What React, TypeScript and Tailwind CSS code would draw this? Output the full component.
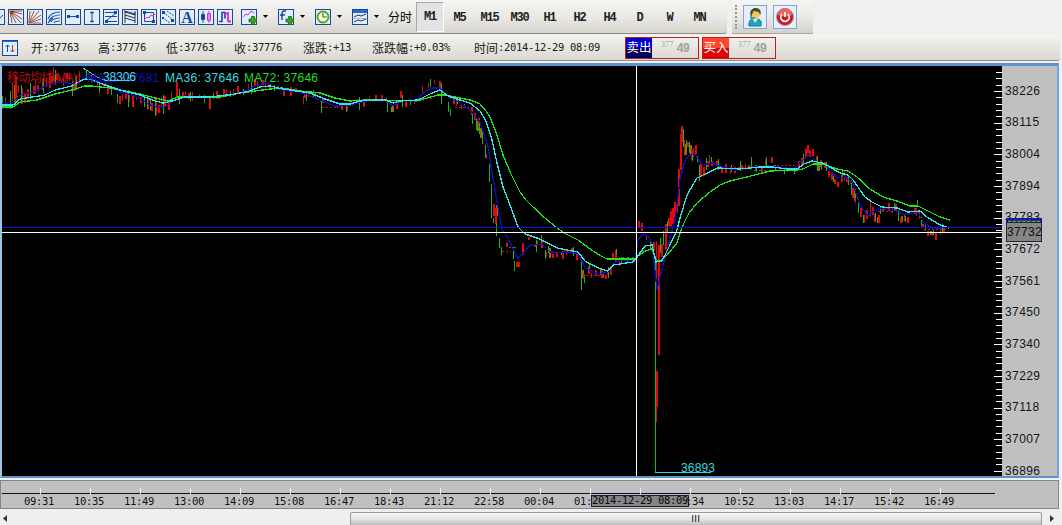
import React from "react";

const NUM = "font-['DejaVu_Sans_Mono','Noto_Sans_CJK_SC',monospace] text-[10.5px] tracking-[-.32px]";
const CJK = "font-['Noto_Sans_CJK_SC',sans-serif] text-[12px] tracking-normal";

function Tool({ children, box = true }: { children?: React.ReactNode; box?: boolean }) {
  return (
    <svg width="16" height="16" viewBox="0 0 16 16" fill="none" stroke="#1848a0" className="block shrink-0">
      {box && <rect x="0.5" y="0.5" width="15" height="15" fill="#e0edfc" stroke="#164b9b" />}
      {children}
    </svg>
  );
}

function Plus() {
  return (
    <path d="M8.500 9.500h2.500V7h3v2.500h2.500v3H14V15h-3v-2.500H8.500z" transform="translate(-.5 .5)" fill="#39a31c" stroke="#176415" strokeWidth=".8" />
  );
}

function Caret() {
  return (
    <svg width="6" height="4" viewBox="0 0 6 4" className="mx-[6px] shrink-0">
      <path d="M0 0h5L2.500 3z" fill="#000" />
    </svg>
  );
}

const PERIODS = ["M1", "M5", "M15", "M30", "H1", "H2", "H4", "D", "W", "MN"];

function ToolRow() {
  return (
    <div className="flex h-[34px] items-start">
      <div className="flex h-[34px] w-[727px] shrink-0 items-center overflow-hidden rounded-r-[3px] border-b border-[#8e8c86] bg-linear-to-b from-[#f5f5f3] via-[#eae9e5] to-[#d6d4cd]">
        <div className="-ml-[11px] flex shrink-0 gap-[3px]">
          <Tool><path d="M8 12l6-6" /></Tool>
          <Tool><path d="M2 2l12 3M2 2l12 8M2 2l11 12M2 2l6 12M2 2l2 12M2 2l12 0" stroke="#9c4a38" /><path d="M2 2h5L3 6z" fill="#9c3424" stroke="none" /></Tool>
          <Tool><path d="M2 14l1-12M2 14l5-12M2 14L12 2M2 14l12-8M2 14l12-4M2 14h12" stroke="#a85642" /></Tool>
          <Tool><path d="M2 10C4 5 8 3 14 3M3 12c2-4 5-6 11-6M5 13c2-3 4-4 9-4M8 14c1-2 3-2 6-2M2 14l5-5" stroke="#2860ac" strokeWidth="1.200" /></Tool>
          <Tool><path d="M3 7.500h10" /><path d="M2 6h3v3H2zM11 6h3v3h-3z" fill="#1848a0" stroke="none" /></Tool>
          <Tool><path d="M8 3.500v9" /><path d="M6.500 3h3v1h-3zM6.500 12h3v1h-3z" fill="#1848a0" strokeWidth=".6" /></Tool>
          <Tool><path d="M2 3.500h12M2 7.500h12M2 12.500h12M3 12L13 4" /><path d="M2 11h3v3H2zM11 2h3v3h-3z" fill="#1848a0" stroke="none" /></Tool>
          <Tool><path d="M3 2v12M3 3l10 3M3 6l10 3M3 9l10 3M13 2v12M2 2l12 3" stroke="#30343c" /></Tool>
          <Tool><path d="M3.500 3.500h9v9h-9z" /><path d="M2 2h3v3H2zM11 11h3v3h-3z" fill="#1848a0" stroke="none" /><path d="M3 11l3-3 2 1 2-3 2 1 2-2" stroke="#cf2ccf" /></Tool>
          <Tool><path d="M3 3l10 8M3 9l7 5M7 2l7 5" strokeDasharray="2 1" /><path d="M2 2h3v3H2zM11 10h3v3h-3zM2 8h2v2H2z" fill="#1848a0" stroke="none" /></Tool>
          <Tool><text x="8" y="13.500" textAnchor="middle" stroke="none" fill="#1648a0" className="font-['Liberation_Serif',serif] text-[16px] font-bold">A</text></Tool>
          <Tool><path d="M5 2v12" /><path d="M3.500 5.500h3v5h-3z" fill="#1648a0" /><path d="M11 2v12M9.500 4.500h3v7h-3z" fill="#f9dbff" stroke="#d72bdc" /></Tool>
          <Tool><path d="M2 12.500h3V3.500h3v6" strokeWidth="1.600" /><path d="M8 4.500h3M11 3v10M11 12.500h3" stroke="#db24da" strokeWidth="1.800" /></Tool>
        </div>
        <div className="ml-[8px] flex shrink-0 items-center">
          <Tool><path d="M2 8l3-3 2 1 3-4 3 2" stroke="#c638d1" /><Plus /></Tool><Caret />
          <span className="w-[3px]" />
          <Tool><path d="M8 2H6Q4 2 4 5v6M2 6h5" strokeWidth="1.400" /><Plus /></Tool><Caret />
          <span className="w-[3px]" />
          <Tool><circle cx="8" cy="8" r="5.500" fill="#f5f8dc" stroke="#52a423" strokeWidth="1.800" /><path d="M8 4v4h4" stroke="#357527" strokeWidth="1.200" /></Tool><Caret />
          <span className="w-[3px]" />
          <Tool><rect x="1" y="1" width="14" height="3" fill="#2869c4" stroke="none" /><path d="M1 9.500h14" stroke="#9dbce4" /><path d="M2 8l4-2 3 1 5-2M2 13l4-2 3 1 5-2" stroke="#283838" /></Tool><Caret />
        </div>
        <span className="ml-[2px] w-[28px] shrink-0 font-['Noto_Sans_CJK_SC',sans-serif] text-[12px] leading-[20px] text-black">分时</span>
        <div className="flex shrink-0">
          {PERIODS.map((p, i) => (
            <span key={p} className={i === 0
              ? "flex h-[30px] w-[28px] items-center justify-center border border-[#aaa] border-r-white border-b-white bg-[#e3e3e6] font-['Liberation_Mono',monospace] text-[12px] font-bold tracking-[-1.2px] text-[#222]"
              : "flex h-[30px] w-[30px] items-center justify-center pt-[2px] pl-px font-['Liberation_Mono',monospace] text-[12px] font-bold tracking-[-1.2px] text-[#222]"}>{p}</span>
          ))}
        </div>
      </div>
      <div className="ml-[5px] flex h-[34px] w-[81px] shrink-0 items-center border-b border-[#aaa8a3] bg-linear-to-b from-[#f5f5f3] via-[#eae9e5] to-[#d3d1ca]">
        <div className="ml-[3px] h-[24px] w-[2px] border-l-2 border-dotted border-[#969692]" />
        <svg width="24" height="24" viewBox="0 0 24 24" className="ml-[6px]">
          <rect x=".5" y=".5" width="23" height="23" fill="#e7edfa" stroke="#86a5d0" />
          <path d="M6 21c-1-6 3-8 7-7 5 0 6 3 5 7z" fill="#239fc0" stroke="#147f9b" />
          <path d="M9 13l3 5 3-4" fill="#d8f0dc" />
          <circle cx="12.500" cy="9" r="4.500" fill="#f1cb58" />
          <path d="M7.500 10c-1-5 2-7 5-7 4 0 6 2 5 7l-2-3-5-1-2 5z" fill="#43522b" />
          <path d="M8 10v3h4" fill="none" stroke="#298eaa" strokeWidth="1.500" />
        </svg>
        <svg width="24" height="24" viewBox="0 0 24 24" className="ml-[6px]">
          <rect x=".5" y=".5" width="23" height="23" fill="#e7edfa" stroke="#86a5d0" />
          <circle cx="12" cy="12" r="8.500" fill="#cf171d" stroke="#9e9a9d" />
          <path d="M5 10a7 7 0 0 1 14 0q-7 3-14 0" fill="#ed6560" />
          <path d="M9 9a4.300 4.300 0 1 0 6 0M12 7v5" stroke="#fff" strokeWidth="1.600" fill="none" />
        </svg>
      </div>
    </div>
  );
}

function Quote({ name, value, width }: { name: string; value: string; width: number }) {
  return (
    <div className="flex shrink-0 items-center pt-px text-[#202020]" style={{ width }}>
      <span className={CJK}>{name}</span>
      <span className={NUM}>:{value}</span>
    </div>
  );
}

function Deal({ label, sell }: { label: string; sell?: boolean }) {
  return (
    <div className="mr-[3px] flex h-[22px] w-[74px] shrink-0 border border-[#b92020]">
      <span className={sell
        ? "flex w-[26px] items-center justify-center bg-linear-to-b from-[#0000cc] from-50% to-[#00005e] to-50% font-['Noto_Sans_CJK_SC',sans-serif] text-[12.5px] text-white"
        : "flex w-[26px] items-center justify-center bg-linear-to-b from-[#ff472b] from-50% to-[#dc0505] to-50% font-['Noto_Sans_CJK_SC',sans-serif] text-[12.5px] text-white"}>{label}</span>
      <span className="mt-[3px] ml-[9px] font-['Liberation_Serif',serif] text-[8px] leading-[8px] tracking-[.2px] text-[#a5a5a1]">377</span>
      <span className="mt-[4px] ml-[3px] font-['Liberation_Mono',monospace] text-[12px] leading-[14px] font-bold tracking-[-1px] text-[#a3a3a0]">49</span>
    </div>
  );
}

function QuoteRow() {
  return (
    <div className="mt-px flex h-[26px] w-[1060px] items-center rounded-r-[3px] border-b border-[#8f8e89] bg-linear-to-b from-[#f3f3f1] to-[#dad8d1]">
      <div className="ml-[2px] w-[29px] shrink-0">
        <Tool><path d="M1 1.500h14" stroke="#2f6bc0" /><path d="M5.500 5v7M3.500 7l2-2 2 2" /><path d="M10.500 5v7M8.500 10l2 2 2-2" stroke="#b6322d" /></Tool>
      </div>
      <Quote name="开" value="37763" width={67} />
      <Quote name="高" value="37776" width={68} />
      <Quote name="低" value="37763" width={68} />
      <Quote name="收" value="37776" width={69} />
      <Quote name="涨跌" value="+13" width={69} />
      <Quote name="涨跌幅" value="+0.03%" width={102} />
      <Quote name="时间" value="2014-12-29 08:09" width={151} />
      <Deal label="卖出" sell />
      <Deal label="买入" />
    </div>
  );
}

const SLOW = "2,107 13,107 20,102 37,100 55,94 72,90 85,86 92,86 100,87 110,88 125,91 140,94 155,98 168,101 178,97 200,97 220,97 240,93 255,91 270,89 282,88 300,91 320,93 335,98 350,101 365,100 385,100 400,101 420,100 438,95 446,95 460,98 470,100 480,104 486,111 490,117 496,132 503,155 511,174 520,192 526,200 533,207 545,218 557,228 566,234 578,240 593,251 601,256 607,259 636,259 638,256 645,251 652,249 656,260 660,261 667,255 677,243 683,225 689,213 697,203 710,192 720,185 730,181 747,177 770,171 797,170 803,169 813,164 823,164 837,169 848,171 857,177 870,189 883,197 897,201 910,206 918,206 930,212 940,217 950,220";
const MID = "2,105 13,105 20,99 45,95 55,90 72,86 78,82 85,79 92,80 105,85 120,90 140,95 152,100 163,103 172,101 185,97 210,97 235,94 250,91 260,87 270,86 283,89 310,93 325,99 340,104 350,104 360,101 375,100 385,100 393,103 400,101 418,100 430,94 440,90 448,96 460,100 470,103 480,111 486,121 492,140 497,163 503,187 510,205 518,227 525,234 540,239 557,248 578,252 585,261 598,268 608,271 613,265 633,262 637,257 645,246 652,245 656,262 662,261 670,245 677,230 680,218 687,195 697,178 703,175 718,168 740,169 760,167 773,167 787,169 797,169 804,164 812,161 823,163 840,173 848,175 853,180 865,197 872,202 882,207 897,208 908,212 920,211 927,217 940,225 949,228";
const FAST = "2,104 13,102 20,95 35,91 50,84 60,82 78,84 85,76 95,80 110,86 120,92 135,96 150,105 163,108 175,100 185,96 205,98 225,95 240,93 255,86 265,83 280,90 300,92 320,100 335,106 350,105 370,100 385,100 393,106 402,101 418,99 425,91 432,88 440,88 450,98 460,103 470,110 480,122 488,147 495,190 502,230 508,238 518,259 530,245 542,244 550,252 578,253 585,268 598,274 608,272 613,264 618,260 635,260 638,240 643,234 648,236 652,243 657,290 660,277 665,257 675,220 680,180 685,160 688,156 695,154 702,165 712,163 723,167 735,170 753,167 770,166 793,169 803,160 810,154 818,162 827,166 837,178 845,177 852,182 860,205 868,216 875,210 882,208 893,210 905,215 918,212 923,222 933,229 949,227";

/* Each candle is [x, high, low]; wide bodies are drawn two pixels across. */
type Bar = [number, number, number];
const UP_WIDE: Bar[] = [
  [15,76,100],[21,88,104],[24,93,103],[27,89,99],[33,86,94],[37,85,91],[42,79,90],[49,73,88],[51,76,83],[56,74,80],[66,73,79],[73,83,91],
  [103,84,88],[107,86,94],[119,96,104],[125,92,99],[132,95,107],[140,97,103],[151,103,111],[155,97,115],[158,105,113],[164,96,107],[168,102,110],[176,82,98],[182,92,96],[188,93,99],[209,97,109],[216,91,99],[223,89,97],[237,86,94],[254,79,87],[262,80,85],
  [269,84,88],[277,86,90],[283,91,96],[290,87,96],[295,88,92],[304,94,98],[322,98,103],[341,103,110],[346,103,111],[357,99,103],[363,100,107],[375,95,100],[381,95,100],[400,91,98],[405,101,107],[396,102,109],
  [439,81,91],[453,98,104],[471,107,115],[474,113,120],[478,118,128],[485,154,158],[493,204,216],[495,208,224],[506,243,247],[516,262,267],[518,262,267],[522,243,255],[528,237,240],[534,244,247],[541,241,248],[552,254,258],[556,253,257],[562,252,259],[571,248,252],[576,254,260],[583,274,279],[588,266,274],[595,270,276],[601,269,278],[605,275,279],[610,266,275],[612,253,260],[615,250,262],
  [638,221,227],[641,223,231],[653,242,251],[658,245,355],[661,244,257],[665,224,250],[668,218,226],[670,211,226],[672,208,224],[674,202,217],[676,204,213],[678,169,206],[680,134,170],[681,126,142],[687,142,147],[691,150,160],[695,145,154],[700,164,177],[703,167,176],[707,161,167],[711,161,166],[716,161,166],[721,168,173],[725,164,173],[734,170,173],[741,165,170],[748,165,169],[755,165,170],[761,168,174],[771,157,163],[798,161,170],[801,158,165],[805,149,157],[807,145,153],[809,150,157],
  [812,149,156],[816,156,165],[820,160,167],[824,162,168],[828,171,177],[831,173,180],[834,179,184],[837,182,187],[841,175,182],[846,177,182],[850,180,184],[852,188,198],[860,208,217],[863,215,223],[866,210,219],[872,207,215],[874,214,222],[878,215,223],[882,207,212],[888,203,211],[895,204,211],[900,217,223],[907,217,223],[914,208,214],[922,224,228],[927,231,236],[935,233,240],[943,228,233],
];
const UP_THIN: Bar[] = [
  [5,97,103],[12,82,102],[18,85,93],[30,90,96],[35,79,93],[46,78,87],[53,67,81],[59,76,82],[63,78,86],[69,75,81],[79,71,84],[91,75,83],[97,82,88],[122,94,101],[129,94,102],[136,96,100],[148,97,108],[161,97,107],[171,91,103],[185,91,97],[192,92,101],[199,94,98],[219,94,99],[226,89,97],[233,89,96],[248,84,92],[257,81,89],[265,84,91],[303,96,104],[308,91,97],[315,93,97],[337,105,108],[352,102,106],[369,96,100],[386,97,103],[414,99,104],[422,86,93],[428,83,88],[434,80,84],[456,98,106],[461,105,109],[468,106,110],[537,241,245],[546,252,257],[566,250,255],[591,273,278],[607,270,275],[619,257,266],[634,258,262],[646,235,240],[656,241,290],[684,140,156],[693,148,157],[709,155,163],[730,168,174],[745,164,170],[751,163,168],[765,159,165],[787,168,172],[795,168,172],[844,170,181],[855,193,203],[870,202,217],[884,206,210],[892,208,213],[904,214,221],[916,208,216],[919,210,219],[932,232,236],[940,230,235],
];
const DOWN: Bar[] = [
  [2,96,109],[10,91,109],[21,85,103],[30,83,99],[43,77,93],[55,70,85],[72,81,96],[86,70,79],[99,83,93],[111,87,95],[117,94,103],[128,90,107],[144,95,107],[150,98,110],[155,103,116],[163,95,114],[179,89,104],[190,92,101],[204,95,103],[213,93,99],[230,91,97],[243,89,95],[251,82,94],[274,85,91],[306,91,101],[313,90,97],[321,101,113],[346,106,112],[359,97,110],[387,100,112],[391,107,112],[402,95,107],[410,99,105],[430,79,87],[441,83,104],[448,102,112],[450,109,116],[457,98,104],[464,104,108],[472,112,124],[476,119,130],[479,122,134],[482,130,144],[485,145,158],[489,164,182],[491,184,218],[493,218,223],[496,223,236],[499,238,248],[501,247,255],[513,247,259],[514,261,271],[536,240,252],[541,235,243],[545,250,259],[548,246,253],[561,252,255],[573,247,256],[581,260,290],[584,277,283],[589,263,270],[600,268,275],[608,267,278],[616,249,255],[621,257,264],[627,257,263],[650,240,249],[652,243,251],[655,256,472],[660,238,253],[663,231,245],[667,221,232],[683,129,147],[686,140,151],[689,142,153],[692,153,161],[697,156,162],[699,165,181],[706,158,170],[711,157,164],[718,159,170],[731,165,172],[740,161,171],[751,157,169],[756,165,172],[766,157,166],[775,165,170],[784,168,174],[794,168,174],[803,154,165],[817,157,171],[821,163,170],[826,162,171],[833,176,182],[842,170,178],[848,176,185],[851,182,195],[855,190,198],[858,201,213],[863,215,223],[875,213,221],[880,206,214],[894,203,210],[898,211,221],[905,215,222],[917,200,206],[921,217,226],[925,224,231],[933,229,235],[942,224,232],
];
const OLIVE: Bar[] = [[14,85,102],[75,76,90],[147,97,109],[392,105,112],[477,121,131],[480,128,138],[496,205,216],[549,248,258],[582,270,278],[602,272,278],[685,144,155],[690,145,156],[818,163,171],[854,189,201],[877,217,223],[901,216,222],[930,231,235]];

const thin = (bars: Bar[]) => bars.map(([x, a, b]) => `M${x + 0.5} ${a}V${b}`).join("");
const wide = (bars: Bar[]) => bars.map(([x, a, b]) => `M${x + 1} ${a}V${b}`).join("");
const MINOR = Array.from({ length: 65 }, (_, i) => Math.round((i - 3) * 6.33 + 91) + 0.5).filter((_, i) => (i - 3) % 5 !== 0).map((y) => `M996 ${y}h6`).join("");
const MAJOR = Array.from({ length: 13 }, (_, i) => `M994 ${Math.round(i * 31.65 + 91) + 0.5}h8`).join("");
const PRICES = [38226, 38115, 38004, 37894, 37783, 37672, 37561, 37450, 37340, 37229, 37118, 37007, 36896];
const TIMES = ["09:31", "10:35", "11:49", "13:00", "14:09", "15:08", "16:47", "18:43", "21:12", "22:58", "00:04", "01:  ", "", "  :34", "10:52", "13:03", "14:17", "15:42", "16:49"];

function Chart() {
  return (
    <svg width="1000" height="410" viewBox="2 66 1000 410" fill="none" className="block shrink-0 bg-black" shapeRendering="crispEdges">
      <path d={wide(OLIVE)} stroke="#957000" strokeWidth="2" />
      <path d={thin(UP_THIN)} stroke="#d01010" />
      <path d={wide(UP_WIDE)} stroke="#e60808" strokeWidth="2" />
      <path d={thin(DOWN)} stroke="#1bb816" />
      <path d="M657 371V407" stroke="#e60808" strokeWidth="2" />
      <path d="M656.500 405V422" stroke="#b51515" />
      <path d="M322 107.500h16M362 99.500h20M418 98.500h15M455 107.500h14M502 251.500h9M562 251.500h14M586 275.500h20M617 259.500h20M726 167.500h20M773 165.500h22M878 211.500h14M924 229.500h24" stroke="#c21515" strokeDasharray="2 2" />
      <path d="M17 96.500h10M180 97.500h32M410 101.500h10M509 247.500h8M564 250.500h10M622 257.500h14M754 170.500h28" stroke="#178b13" strokeDasharray="2 3" />
      <polyline points={FAST} stroke="#0c0cc0" strokeWidth="1.300" />
      <polyline points={SLOW} stroke="#20e51a" strokeWidth="1.300" />
      <polyline points={MID} stroke="#35e5ea" strokeWidth="1.300" />
      <rect x="2" y="227" width="1000" height="1" fill="#1010d0" />
      <rect x="2" y="232" width="1000" height="1" fill="#fff" />
      <rect x="636" y="66" width="1" height="410" fill="#fff" />
      <path d={MINOR + MAJOR} stroke="#fff" />
      <path d="M83 68l14 9 8 3h30M655 472.500h56" stroke="#35d5db" />
      <g stroke="none" className="font-['Liberation_Sans','Noto_Sans_CJK_SC',sans-serif] text-[12px]">
        <text x="7" y="82" fill="#b80d0d" textLength="73">移动均线(MA):</text>
        <text x="87" y="82" fill="#1111b5" textLength="72">MA12: 37681</text>
        <text x="103" y="81" fill="#45dce5" textLength="33">38306</text>
        <text x="165" y="82" fill="#39dce0" textLength="74">MA36: 37646</text>
        <text x="244" y="82" fill="#24db28" textLength="74">MA72: 37646</text>
        <text x="681" y="472" fill="#37d8df" textLength="34">36893</text>
      </g>
    </svg>
  );
}

export default function App() {
  return (
    <div className="h-[525px] w-[1062px] overflow-hidden bg-[#f1f0ee]">
      <ToolRow />
      <QuoteRow />
      <div className="mt-[2px] flex h-[415px] w-[1059px] border-2 border-t-[3px] border-[#5a93cf] border-r-[#6ba7e5] border-l-[#9dc4e9]">
        <Chart />
        <div className="relative h-[410px] w-[55px] overflow-hidden bg-[#c0c0c0] pt-[9px]">
          {PRICES.map((p) => (
            <div key={p} className="flex h-[31.65px] items-center pl-[3px] font-['Liberation_Sans',sans-serif] text-[12px] tracking-[.4px] text-[#151515]">{p}</div>
          ))}
          <div className="absolute top-[152px] left-[4px] h-[6px] w-[36px] border-2 border-[#1717a3] bg-[#3b3b73]">
            <div className="mt-px border-t border-dashed border-[#39bf34]" />
          </div>
          <div className="absolute top-[156px] left-[4px] flex h-[20px] w-[36px] items-center border border-[#26263b] bg-[#858585] font-['Liberation_Sans',sans-serif] text-[12px] tracking-[.3px] text-[#101010]">37732</div>
        </div>
      </div>
      <div className="mt-[2px] h-[29px] w-[1059px] border border-[#848484] bg-[#c0c0c0]">
        <svg width="1057" height="13" viewBox="1 481 1057 13" className="block">
          <path d="M2 493.500H995" stroke="#111" />
          <path d={TIMES.map((_, i) => `M${40.5 + i * 50} 488v6`).join("")} stroke="#fff" />
        </svg>
        <div className="relative flex h-[14px] pl-[13px]">
          {TIMES.map((t, i) => (
            <span key={i} className="flex w-[50px] shrink-0 items-center justify-center pt-[2px] font-['DejaVu_Sans_Mono',monospace] text-[10.5px] tracking-[-.32px] whitespace-pre text-[#111]">{t}</span>
          ))}
          <div className="absolute top-px left-[590px] flex h-[12px] w-[98px] items-center border border-[#1b1b42] bg-[#858585] font-['DejaVu_Sans_Mono',monospace] text-[10.5px] tracking-[-.32px] whitespace-pre text-[#080808]">2014-12-29 08:09</div>
        </div>
      </div>
      <div className="mt-[2px] flex h-[15px] items-center bg-[#efefef]">
        <svg width="350" height="14"><path d="M7 3v7L3 6.500z" fill="#333" /></svg>
        <div className="flex h-[14px] w-[692px] items-center justify-center gap-px rounded-[2px] border border-[#999] bg-linear-to-b from-[#f7f7f7] via-[#e4e4e4] to-[#bebebe]">
          <i className="h-[7px] w-[2px] border-l border-[#555] bg-[#bbb]" />
          <i className="h-[7px] w-[2px] border-l border-[#555] bg-[#bbb]" />
          <i className="h-[7px] w-[2px] border-l border-[#555] bg-[#bbb]" />
        </div>
        <svg width="20" height="14"><path d="M8 3v7l4-3.500z" fill="#333" /></svg>
      </div>
    </div>
  );
}
